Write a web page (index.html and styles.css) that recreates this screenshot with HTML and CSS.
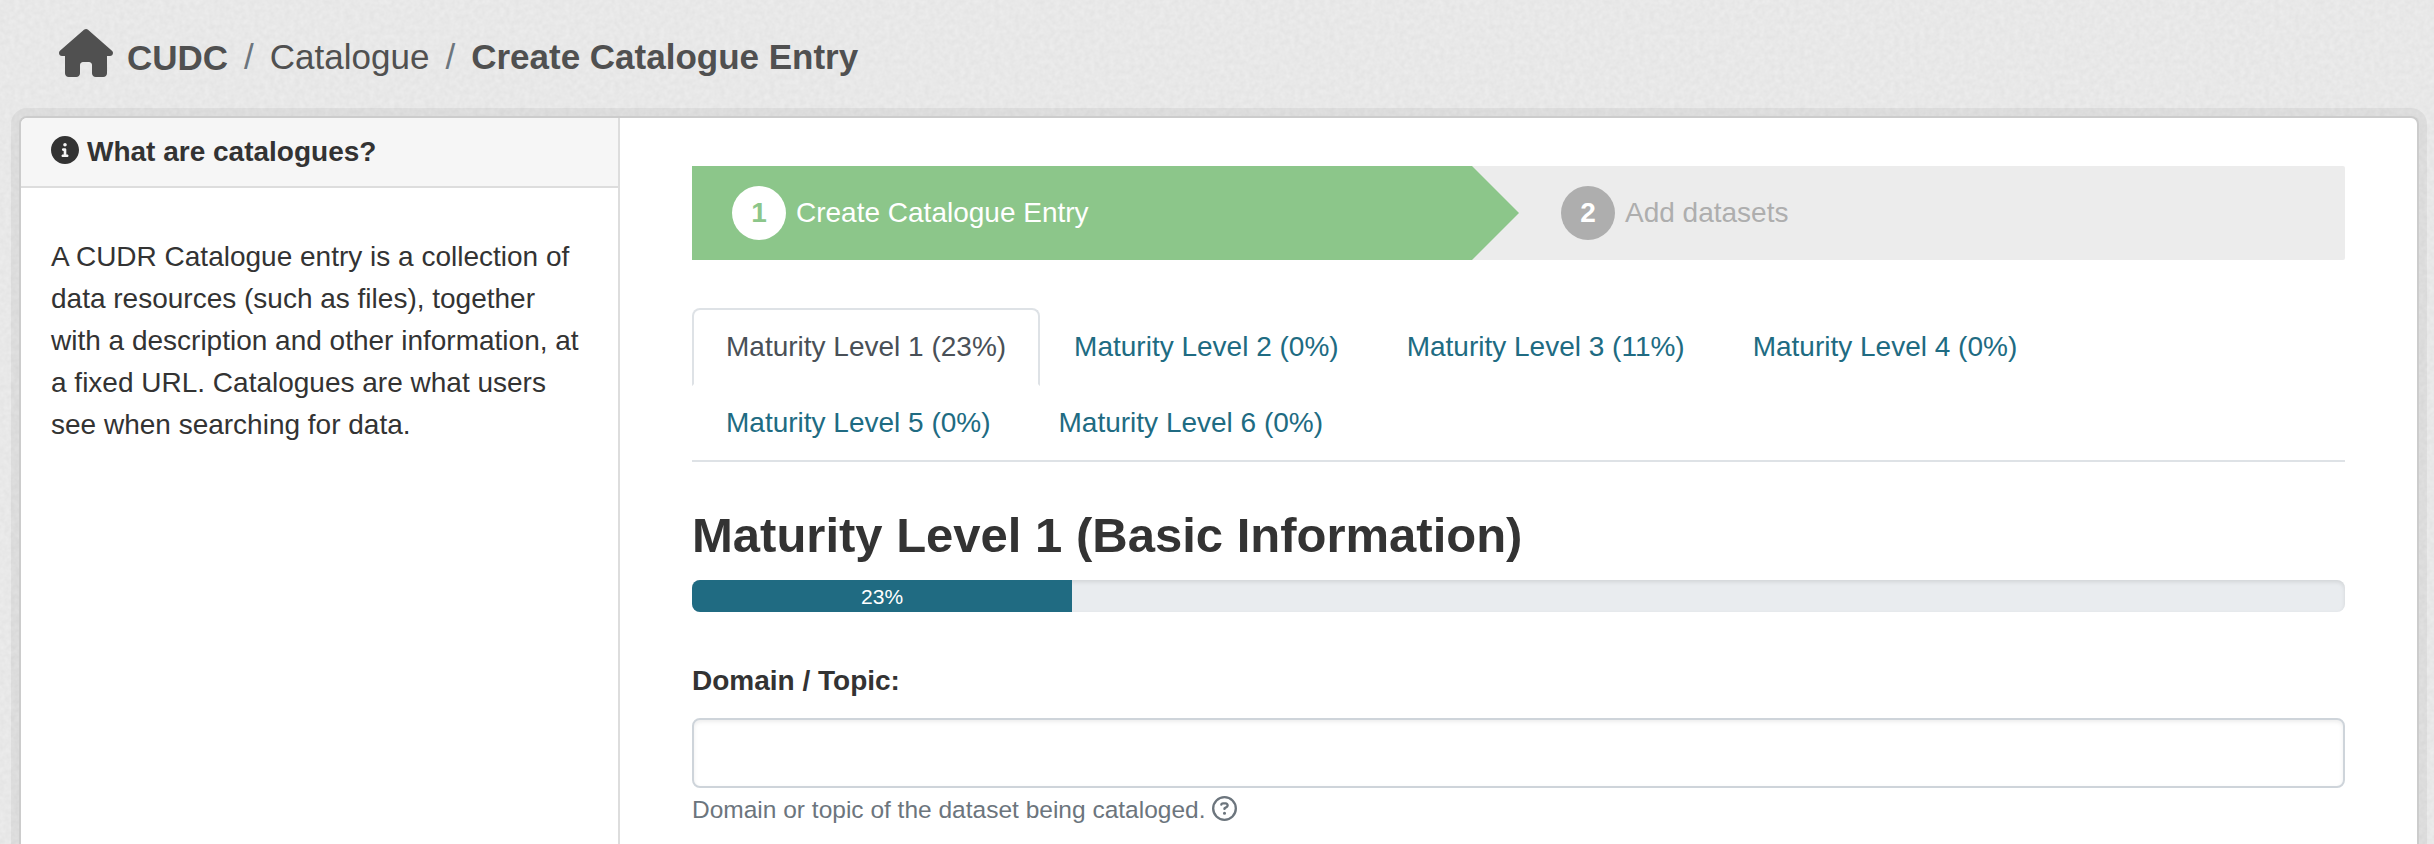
FILE: index.html
```html
<!DOCTYPE html>
<html lang="en">
<head>
<meta charset="utf-8">
<title>Create Catalogue Entry</title>
<link rel="stylesheet" href="styles.css">
</head>
<body>
<svg class="texture" aria-hidden="true">
  <filter id="grain" x="0" y="0" width="100%" height="100%" color-interpolation-filters="sRGB">
    <feTurbulence type="fractalNoise" baseFrequency="0.2" numOctaves="2" seed="4"/>
    <feColorMatrix values="0.05 0 0 0 0.885  0.05 0 0 0 0.885  0.05 0 0 0 0.885  0 0 0 0 1"/>
  </filter>
  <rect width="100%" height="100%" filter="url(#grain)"/>
</svg>
<div class="page">
  <nav class="breadcrumb">
    <a class="home"><svg class="home-icon" viewBox="0 0 576 512"><path d="M575.8 255.5C575.8 273.5 560.8 287.6 543.8 287.6H511.8L512.5 447.7C512.5 450.5 512.3 453.1 512 455.8V472C512 494.1 494.1 512 472 512H392C369.9 512 352 494.1 352 472V384C352 366.3 337.7 352 320 352H256C238.3 352 224 366.3 224 384V472C224 494.1 206.1 512 184 512H104C81.9 512 64 494.1 64 472V287.6H32C14 287.6 0 273.5 0 255.5C0 246.5 3 238.5 10 231.5L266.4 8C273.4 1 281.4 0 288.4 0C295.4 0 303.4 2 309.5 7L564.8 231.5C572.8 238.5 576.9 246.5 575.8 255.5z"/></svg><strong class="site">CUDC</strong></a>
    <span class="slash">/</span>
    <a>Catalogue</a>
    <span class="slash">/</span>
    <strong>Create Catalogue Entry</strong>
  </nav>
  <div class="wrapper">
    <aside class="sidebar">
      <h2 class="side-heading"><svg class="info-icon" viewBox="0 0 512 512"><path d="M256 0C114.6 0 0 114.6 0 256s114.6 256 256 256s256-114.6 256-256S397.4 0 256 0zM256 128c17.67 0 32 14.33 32 32c0 17.67-14.33 32-32 32S224 177.7 224 160C224 142.3 238.3 128 256 128zM296 384h-80C202.8 384 192 373.3 192 360s10.75-24 24-24h16v-64H224c-13.25 0-24-10.75-24-24S210.8 224 224 224h32c13.25 0 24 10.75 24 24v88h16c13.25 0 24 10.75 24 24S309.3 384 296 384z"/></svg>What are catalogues?</h2>
      <p class="side-text">A CUDR Catalogue entry is a collection of data resources (such as files), together with a description and other information, at a fixed URL. Catalogues are what users see when searching for data.</p>
    </aside>
    <main class="main">
      <ol class="stages">
        <li class="stage active"><span class="number">1</span>Create Catalogue Entry</li>
        <li class="stage"><span class="number">2</span>Add datasets</li>
      </ol>
      <ul class="tabs">
        <li class="tab current">Maturity Level 1 (23%)</li>
        <li class="tab">Maturity Level 2 (0%)</li>
        <li class="tab">Maturity Level 3 (11%)</li>
        <li class="tab">Maturity Level 4 (0%)</li>
        <li class="tab">Maturity Level 5 (0%)</li>
        <li class="tab">Maturity Level 6 (0%)</li>
      </ul>
      <h1 class="title">Maturity Level 1 (Basic Information)</h1>
      <div class="progress"><div class="bar" style="width:23%">23%</div></div>
      <label class="label" for="domain">Domain / Topic:</label>
      <input class="input" id="domain" type="text">
      <div class="help">Domain or topic of the dataset being cataloged.<svg class="help-icon" viewBox="0 0 512 512"><circle class="ring" cx="256" cy="256" r="232"/><path d="M169.8 165.3c7.9-22.3 29.1-37.3 52.8-37.3h58.3c34.9 0 63.1 28.3 63.1 63.1c0 22.6-12.1 43.5-31.7 54.8L280 264.4c-.2 13-10.9 23.6-24 23.6c-13.3 0-24-10.7-24-24V250.5c0-8.6 4.6-16.5 12.1-20.8l44.3-25.4c4.7-2.7 7.6-7.7 7.6-13.1c0-8.4-6.8-15.1-15.1-15.1H222.6c-3.4 0-6.4 2.1-7.5 5.3l-.4 1.2c-4.4 12.5-18.2 19-30.6 14.6s-19-18.2-14.6-30.6zM224 352a32 32 0 1 1 64 0 32 32 0 1 1-64 0z"/></svg></div>
    </main>
  </div>
</div>
</body>
</html>
```
FILE: styles.css
```css
* { box-sizing: border-box; }
html, body { height: 100%; }
body {
  margin: 0;
  overflow: hidden;
  background: #e8e8e8;
  color: #333;
  font: 28px/42px "Liberation Sans", Arial, sans-serif;
}
h1, h2, p, ol, ul { margin: 0; padding: 0; }
ol, ul { list-style: none; }
svg { fill: currentColor; flex: none; }

.texture { position: absolute; inset: 0; width: 100%; height: 100%; }
.page { position: relative; height: 844px; padding: 0 15px 0 19px; overflow: hidden; }

.breadcrumb {
  display: flex;
  align-items: center;
  gap: 16px;
  height: 116px;
  padding: 0 40px 2px;
  color: #505050;
  font-size: 35px;
}
.home { display: flex; align-items: center; gap: 14px; }
.home-icon { width: 54px; height: 48px; margin-top: -8px; }
.site { padding-top: 2px; }
.slash { color: #6c757d; }

.wrapper {
  display: flex;
  height: 728px;
  border: 2px solid #ccc;
  border-bottom: 0;
  border-radius: 8px 8px 0 0;
  background: #fff;
  box-shadow: 0 0 0 8px rgba(0, 0, 0, .05);
}
.sidebar { flex: none; width: 599px; border-right: 2px solid #ddd; }
.side-heading {
  display: flex;
  align-items: center;
  gap: 8px;
  height: 70px;
  padding: 0 30px;
  border-bottom: 2px solid #ddd;
  border-top-left-radius: 6px;
  background: #f6f6f6;
  font-size: 28px;
}
.info-icon { width: 28px; height: 28px; margin-top: -4px; }
.side-text { padding: 48px 30px; }

.main { flex: 1; padding: 48px 72px 0; }
.stages { display: flex; height: 94px; background: #ececec; border-radius: 2px; }
.stage {
  display: flex;
  flex: 1;
  align-items: center;
  gap: 10px;
  padding-left: 42px;
  color: #aeaeae;
}
.stage.active {
  flex: none;
  width: 827px;
  padding-left: 40px;
  background: #8cc68a;
  color: #fff;
  clip-path: polygon(0 0, calc(100% - 47px) 0, 100% 50%, calc(100% - 47px) 100%, 0 100%);
}
.number {
  width: 54px;
  height: 54px;
  border-radius: 50%;
  background: #aeaeae;
  color: #fff;
  font-weight: bold;
  line-height: 54px;
  text-align: center;
}
.active .number { background: #fff; color: #8cc68a; }

.tabs {
  display: flex;
  flex-wrap: wrap;
  margin-top: 48px;
  border-bottom: 2px solid #dee2e6;
}
.tab {
  height: 78px;
  margin-bottom: -2px;
  padding: 16px 32px;
  border: 2px solid transparent;
  border-radius: 8px 8px 0 0;
  color: #206b82;
}
.tab:nth-last-child(-n+2) { margin-bottom: 0; height: 76px; }
.tab.current { border-color: #dee2e6 #dee2e6 #fff; color: #495057; }

.title { margin-top: 44px; font-size: 49px; line-height: 59px; }
.progress {
  height: 32px;
  margin-top: 15px;
  overflow: hidden;
  border-radius: 8px;
  background: #e9ecef;
  box-shadow: inset 0 2px 4px rgba(0, 0, 0, .1);
}
.bar {
  height: 32px;
  background: #206b82;
  color: #fff;
  font-size: 21px;
  line-height: 34px;
  text-align: center;
}
.label { display: block; margin-top: 48px; font-weight: bold; }
.input {
  display: block;
  width: 100%;
  height: 70px;
  margin-top: 16px;
  padding: 12px 24px;
  border: 2px solid #ced4da;
  border-radius: 8px;
  background: #fff;
  box-shadow: inset 0 2px 4px rgba(0, 0, 0, .075);
  font: inherit;
}
.help {
  display: flex;
  align-items: center;
  gap: 7px;
  margin-top: 4px;
  color: #6c757d;
  font-size: 24.5px;
  line-height: 36px;
}
.help-icon { width: 25px; height: 25px; margin-top: -3px; }
.ring { fill: none; stroke: currentColor; stroke-width: 48; }
```
